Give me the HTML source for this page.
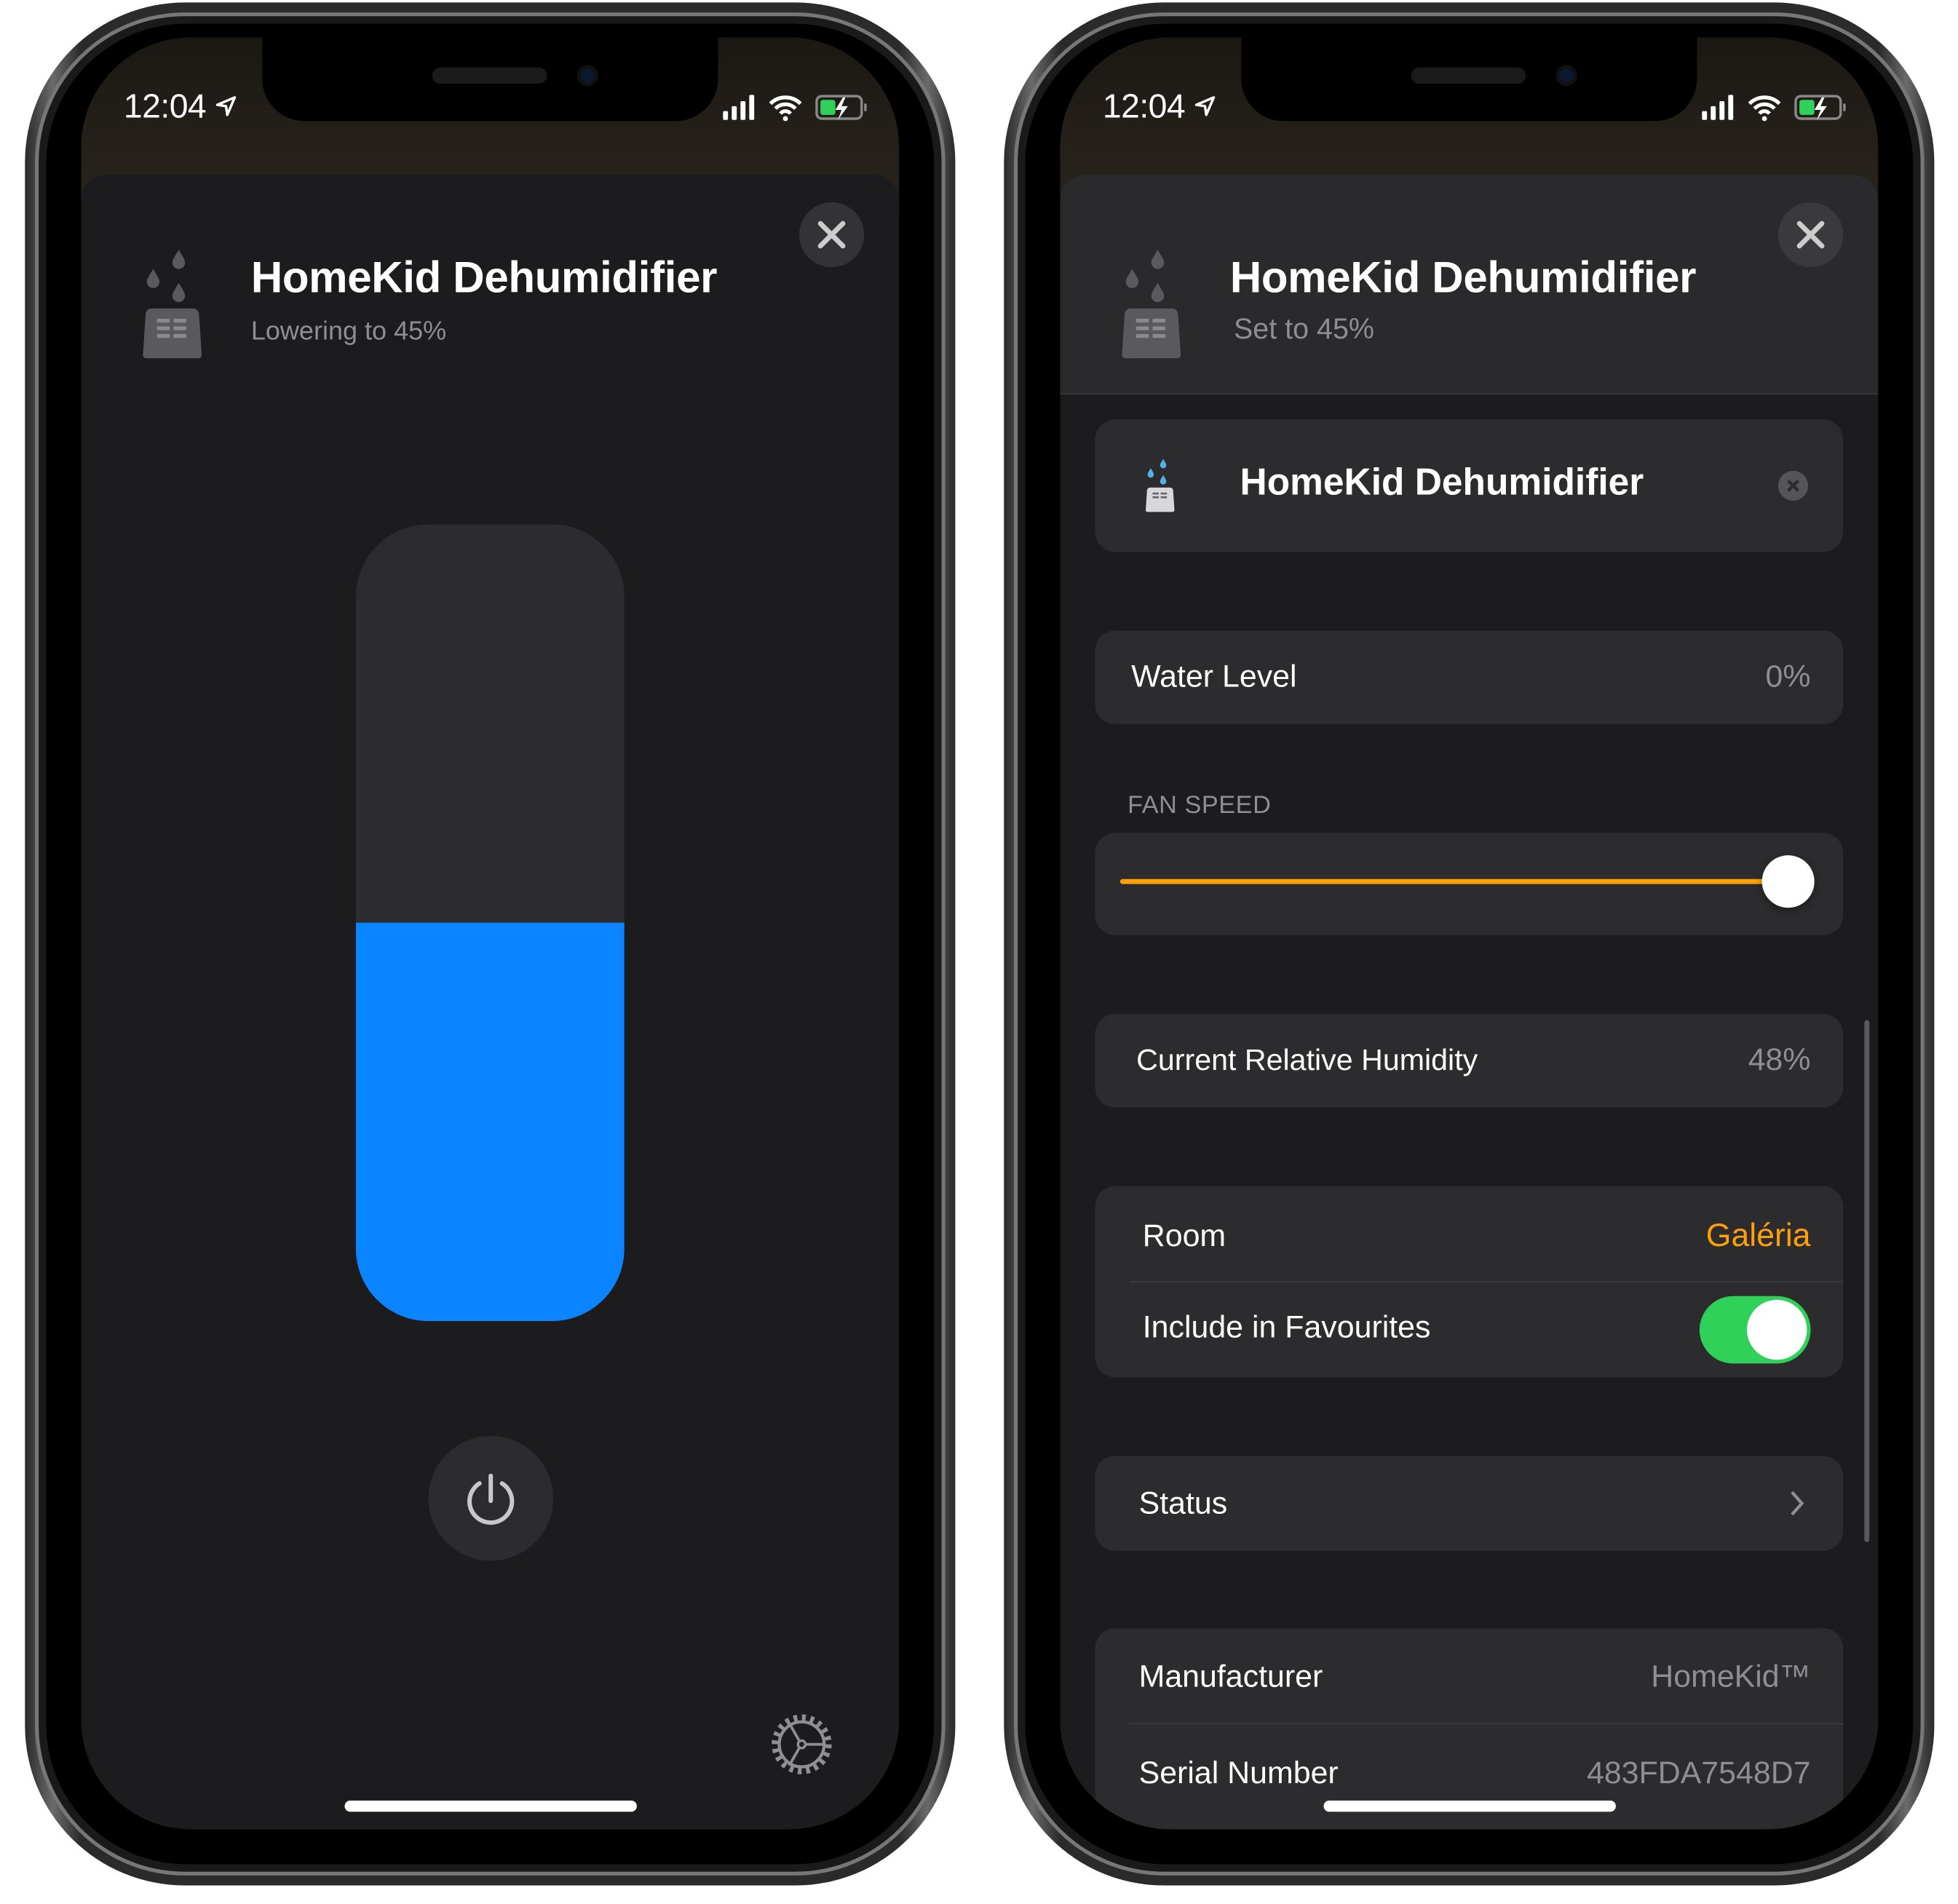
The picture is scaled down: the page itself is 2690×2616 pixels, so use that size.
<!DOCTYPE html>
<html><head><meta charset="utf-8"><style>
*{margin:0;padding:0;box-sizing:border-box}
html,body{width:2690px;height:2616px;background:#fff;overflow:hidden}
#w{position:absolute;left:0;top:0;width:1568px;height:1525px;transform:scale(1.71556);transform-origin:0 0;font-family:"Liberation Sans",sans-serif}
.ph{position:absolute;top:2px;width:745px;height:1508px;border-radius:128px;background:linear-gradient(90deg,#2a2a2a,#6a6a6a 3%,#2b2b2b 6%,#2b2b2b 94%,#6a6a6a 97%,#2a2a2a);}
.rim{position:absolute;left:8px;top:8px;right:8px;bottom:8px;border-radius:120px;background:#1a1a1a;border:3px solid #777}
.bez{position:absolute;left:17px;top:17px;right:17px;bottom:17px;border-radius:112px;background:#000}
.scr{position:absolute;left:45px;top:28px;width:655px;height:1435px;border-radius:88px;overflow:hidden;background:#1c1c1e}
.top{position:absolute;left:0;top:0;width:100%;height:140px;background:linear-gradient(#1b1814,#2a241d)}
.notch{position:absolute;left:145px;top:0;width:365px;height:67px;background:#000;border-radius:0 0 34px 34px}
.spk{position:absolute;left:136px;top:24px;width:92px;height:13px;border-radius:7px;background:#1a1a1a}
.cam{position:absolute;left:252px;top:22px;width:17px;height:17px;border-radius:50%;background:#0a1830;border:3px solid #111}
.time{position:absolute;left:34px;top:40px;color:#fff;font-size:27px;letter-spacing:-0.3px}
.sheet{position:absolute;left:0;top:110px;width:100%;height:1400px;background:#1c1c1e;border-radius:20px 20px 0 0}
.x{position:absolute;left:575px;top:132px;width:52px;height:52px;border-radius:50%;background:#333336}
.title{position:absolute;left:136px;top:173px;color:#fff;font-size:35px;font-weight:bold;letter-spacing:-0.2px}
.sub{position:absolute;left:136px;top:224px;color:#8e8e93;font-size:21px}
.hi{position:absolute;left:211px;top:1412px;width:234px;height:9px;border-radius:5px;background:#fff}
.card{position:absolute;left:28px;width:599px;background:#2c2c2e;border-radius:16px}
.lbl{position:absolute;color:#fff;font-size:25px}
.val{position:absolute;right:26px;color:#8e8e93;font-size:25px}
</style></head><body><div id="w">

<svg width="0" height="0" style="position:absolute"><defs>
<g id="ico"><path d="M29 2c3 5 5 8 5 10a5 5 0 0 1-10 0c0-2 2-5 5-10z"/><path d="M9 17c3 5 5 8 5 10a5 5 0 0 1-10 0c0-2 2-5 5-10z"/><path d="M29 28c3 5 5 8 5 10a5 5 0 0 1-10 0c0-2 2-5 5-10z"/><path d="M8 48h32c4 0 5 3 5 6l2 30c0 2-1 3-3 3H4c-2 0-3-1-3-3l2-30c0-3 1-6 5-6z"/></g>
</defs></svg>

<!-- LEFT PHONE -->
<div class="ph" style="left:20px"><div class="rim"></div><div class="bez"></div>
<div class="scr">
 <div class="top"></div>
 <div class="sheet"></div>
 <div class="notch"><div class="spk"></div><div class="cam"></div></div>
 <div class="time">12:04 <svg width="18" height="18" viewBox="0 0 18 18" style="vertical-align:0"><path d="M16 2L2 8l7 1 1 7z" fill="none" stroke="#fff" stroke-width="2" stroke-linejoin="round"/></svg></div>
 <svg style="position:absolute;left:512px;top:44px" width="120" height="24" viewBox="0 0 120 24">
  <rect x="2" y="15" width="4" height="7" rx="1" fill="#fff"/><rect x="9" y="11" width="4" height="11" rx="1" fill="#fff"/><rect x="16" y="7" width="4" height="15" rx="1" fill="#fff"/><rect x="23" y="2" width="4" height="20" rx="1" fill="#fff"/>
  <path d="M40 9a17 17 0 0 1 24 0M44 13a11 11 0 0 1 16 0M48 17a5 5 0 0 1 8 0" stroke="#fff" stroke-width="3" fill="none"/><circle cx="52" cy="21" r="2" fill="#fff"/>
  <rect x="77" y="3" width="36" height="18" rx="4" fill="none" stroke="#888" stroke-width="2"/><rect x="80" y="6" width="12" height="12" rx="2" fill="#30d158"/><path d="M98 4l-6 10h5l-3 8 8-11h-5l3-7z" fill="#fff"/><rect x="115" y="9" width="2" height="6" fill="#888"/>
 </svg>
 <div class="x"><svg width="52" height="52"><path d="M17 17l18 18M35 17l-18 18" stroke="#ccc" stroke-width="4" stroke-linecap="round"/></svg></div>
 <svg style="position:absolute;left:48px;top:168px" width="50" height="92" viewBox="0 0 48 90" fill="#5a5a5e"><use href="#ico"/><g fill="#8a8a8e"><rect x="12" y="56" width="10" height="3"/><rect x="25" y="56" width="10" height="3"/><rect x="12" y="62" width="10" height="3"/><rect x="25" y="62" width="10" height="3"/><rect x="12" y="68" width="10" height="3"/><rect x="25" y="68" width="10" height="3"/></g></svg>
 <div class="title">HomeKid Dehumidifier</div>
 <div class="sub">Lowering to 45%</div>
 <div style="position:absolute;left:220px;top:390px;width:215px;height:638px;border-radius:58px;overflow:hidden;background:#2c2c30">
  <div style="position:absolute;left:0;top:319px;width:100%;height:319px;background:#0a84ff"></div></div>
 <div style="position:absolute;left:278px;top:1120px;width:100px;height:100px;border-radius:50%;background:#2c2c30">
  <svg width="100" height="100"><path d="M41 38a17 17 0 1 0 18 0" stroke="#c8c8cc" stroke-width="3.5" fill="none" stroke-linecap="round"/><path d="M50 32v20" stroke="#c8c8cc" stroke-width="3.5" stroke-linecap="round"/></svg></div>
 <svg style="position:absolute;left:550px;top:1340px" width="54" height="54" viewBox="0 0 54 54"><circle cx="27" cy="27" r="21" stroke="#8e8e93" stroke-width="6" fill="none" stroke-dasharray="3 3.6"/><circle cx="27" cy="27" r="18" stroke="#8e8e93" stroke-width="2.5" fill="none"/><circle cx="27" cy="27" r="3" stroke="#8e8e93" stroke-width="2" fill="none"/><path d="M30 27h15M25 24l-8-14M25 30l-8 14" stroke="#8e8e93" stroke-width="2.2"/></svg>
 <div class="hi"></div>
</div></div>

<!-- RIGHT PHONE -->
<div class="ph" style="left:804px"><div class="rim"></div><div class="bez"></div>
<div class="scr">
 <div class="top"></div>
 <div class="sheet" style="background:#1c1c1e"></div>
 <div style="position:absolute;left:0;top:110px;width:100%;height:176px;background:#2a2a2c;border-radius:20px 20px 0 0;border-bottom:1px solid #3a3a3c"></div>
 <div class="notch"><div class="spk"></div><div class="cam"></div></div>
 <div class="time">12:04 <svg width="18" height="18" viewBox="0 0 18 18" style="vertical-align:0"><path d="M16 2L2 8l7 1 1 7z" fill="none" stroke="#fff" stroke-width="2" stroke-linejoin="round"/></svg></div>
 <svg style="position:absolute;left:512px;top:44px" width="120" height="24" viewBox="0 0 120 24">
  <rect x="2" y="15" width="4" height="7" rx="1" fill="#fff"/><rect x="9" y="11" width="4" height="11" rx="1" fill="#fff"/><rect x="16" y="7" width="4" height="15" rx="1" fill="#fff"/><rect x="23" y="2" width="4" height="20" rx="1" fill="#fff"/>
  <path d="M40 9a17 17 0 0 1 24 0M44 13a11 11 0 0 1 16 0M48 17a5 5 0 0 1 8 0" stroke="#fff" stroke-width="3" fill="none"/><circle cx="52" cy="21" r="2" fill="#fff"/>
  <rect x="77" y="3" width="36" height="18" rx="4" fill="none" stroke="#888" stroke-width="2"/><rect x="80" y="6" width="12" height="12" rx="2" fill="#30d158"/><path d="M98 4l-6 10h5l-3 8 8-11h-5l3-7z" fill="#fff"/><rect x="115" y="9" width="2" height="6" fill="#888"/>
 </svg>
 <div class="x" style="background:#3a3a3c"><svg width="52" height="52"><path d="M17 17l18 18M35 17l-18 18" stroke="#ccc" stroke-width="4" stroke-linecap="round"/></svg></div>
 <svg style="position:absolute;left:48px;top:168px" width="50" height="92" viewBox="0 0 48 90" fill="#5a5a5e"><use href="#ico"/><g fill="#8a8a8e"><rect x="12" y="56" width="10" height="3"/><rect x="25" y="56" width="10" height="3"/><rect x="12" y="62" width="10" height="3"/><rect x="25" y="62" width="10" height="3"/><rect x="12" y="68" width="10" height="3"/><rect x="25" y="68" width="10" height="3"/></g></svg>
 <div class="title">HomeKid Dehumidifier</div>
 <div class="sub" style="left:139px;font-size:23px;top:220px">Set to 45%</div>

 <div class="card" style="top:306px;height:106px">
  <svg style="position:absolute;left:40px;top:30px" width="24" height="46" viewBox="0 0 48 90"><g fill="#4fb3e8"><path d="M29 2c3 5 5 8 5 10a5 5 0 0 1-10 0c0-2 2-5 5-10z"/><path d="M9 17c3 5 5 8 5 10a5 5 0 0 1-10 0c0-2 2-5 5-10z"/><path d="M29 28c3 5 5 8 5 10a5 5 0 0 1-10 0c0-2 2-5 5-10z"/></g><path d="M8 48h32c4 0 5 3 5 6l2 30c0 2-1 3-3 3H4c-2 0-3-1-3-3l2-30c0-3 1-6 5-6z" fill="#d8d8dc"/><g fill="#666"><rect x="12" y="56" width="10" height="3"/><rect x="25" y="56" width="10" height="3"/><rect x="12" y="62" width="10" height="3"/><rect x="25" y="62" width="10" height="3"/></g></svg>
  <div class="lbl" style="left:116px;top:34px;font-size:30px;font-weight:bold">HomeKid Dehumidifier</div>
  <svg style="position:absolute;left:547px;top:41px" width="24" height="24"><circle cx="12" cy="12" r="12" fill="#555558"/><path d="M8 8l8 8M16 8l-8 8" stroke="#2c2c2e" stroke-width="2.5"/></svg>
 </div>

 <div class="card" style="top:475px;height:75px"><div class="lbl" style="left:29px;top:23px">Water Level</div><div class="val" style="top:23px">0%</div></div>

 <div style="position:absolute;left:54px;top:604px;color:#8e8e93;font-size:20px;letter-spacing:0.3px">FAN SPEED</div>
 <div class="card" style="top:637px;height:82px">
  <div style="position:absolute;left:20px;top:37px;width:540px;height:4px;border-radius:2px;background:#ff9f0a"></div>
  <div style="position:absolute;left:534px;top:18px;width:42px;height:42px;border-radius:50%;background:#fff;box-shadow:0 2px 6px rgba(0,0,0,.4)"></div>
 </div>

 <div class="card" style="top:782px;height:75px"><div class="lbl" style="left:33px;top:24px;font-size:24px">Current Relative Humidity</div><div class="val" style="top:23px">48%</div></div>

 <div class="card" style="top:920px;height:153px">
  <div class="lbl" style="left:38px;top:26px">Room</div><div class="val" style="top:24px;color:#ff9f0a;font-size:26px">Galéria</div>
  <div style="position:absolute;left:28px;right:0;top:76px;height:1px;background:#3d3d40"></div>
  <div class="lbl" style="left:38px;top:99px">Include in Favourites</div>
  <div style="position:absolute;left:484px;top:88px;width:89px;height:54px;border-radius:27px;background:#30d158"><div style="position:absolute;right:3px;top:3px;width:48px;height:48px;border-radius:50%;background:#fff"></div></div>
 </div>

 <div class="card" style="top:1136px;height:76px"><div class="lbl" style="left:35px;top:24px">Status</div>
  <svg style="position:absolute;left:555px;top:26px" width="14" height="24"><path d="M3 3l8 9-8 9" stroke="#8e8e93" stroke-width="2.5" fill="none"/></svg></div>

 <div class="card" style="top:1274px;height:200px">
  <div class="lbl" style="left:35px;top:25px">Manufacturer</div><div class="val" style="top:25px">HomeKid™</div>
  <div style="position:absolute;left:26px;right:0;top:76px;height:1px;background:#3d3d40"></div>
  <div class="lbl" style="left:35px;top:102px">Serial Number</div><div class="val" style="top:102px">483FDA7548D7</div>
 </div>
 <div style="position:absolute;left:644px;top:787px;width:4px;height:418px;border-radius:2px;background:#5a5a5e"></div>
 <div class="hi"></div>
</div></div>

</div></body></html>
